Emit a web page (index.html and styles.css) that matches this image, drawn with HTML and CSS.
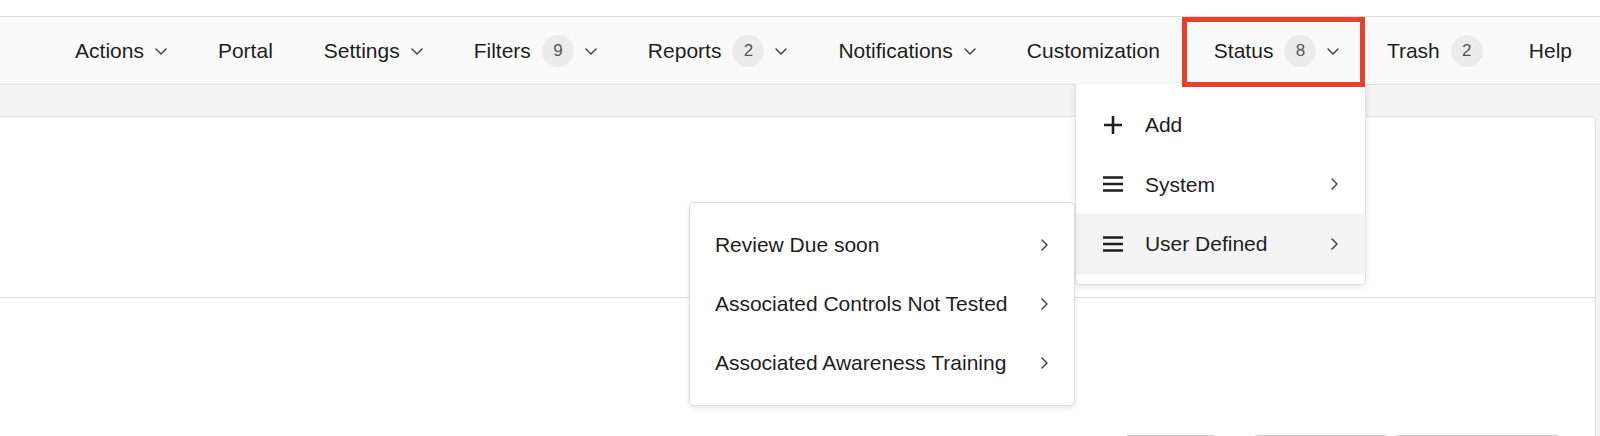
FILE: index.html
```html
<!DOCTYPE html>
<html lang="en">
<head>
<meta charset="utf-8">
<title>Status menu</title>
<link rel="stylesheet" href="styles.css">
</head>
<body>
<div class="topstrip"></div>
<header class="navbar">
  <nav class="nav">
    <div class="nav-item"><span>Actions</span><svg class="chev-down" width="12" height="7" viewBox="0 0 12 7"><path d="M1 1l5 5 5-5"/></svg></div>
    <div class="nav-item"><span>Portal</span></div>
    <div class="nav-item"><span>Settings</span><svg class="chev-down" width="12" height="7" viewBox="0 0 12 7"><path d="M1 1l5 5 5-5"/></svg></div>
    <div class="nav-item"><span>Filters</span><span class="badge">9</span><svg class="chev-down" width="12" height="7" viewBox="0 0 12 7"><path d="M1 1l5 5 5-5"/></svg></div>
    <div class="nav-item"><span>Reports</span><span class="badge">2</span><svg class="chev-down" width="12" height="7" viewBox="0 0 12 7"><path d="M1 1l5 5 5-5"/></svg></div>
    <div class="nav-item"><span>Notifications</span><svg class="chev-down" width="12" height="7" viewBox="0 0 12 7"><path d="M1 1l5 5 5-5"/></svg></div>
    <div class="nav-item"><span>Customization</span></div>
    <div class="nav-item nav-item--open"><span>Status</span><span class="badge">8</span><svg class="chev-down" width="12" height="7" viewBox="0 0 12 7"><path d="M1 1l5 5 5-5"/></svg>
      <div class="dropdown">
        <div class="menu-row">
          <svg class="menu-icon" width="20" height="20" viewBox="0 0 20 20"><path d="M10 1v18M1 10h18"/></svg>
          <span class="menu-label">Add</span>
        </div>
        <div class="menu-row">
          <svg class="menu-icon" width="20" height="16" viewBox="0 0 20 16"><path d="M0 1.5h20M0 8h20M0 14.5h20"/></svg>
          <span class="menu-label">System</span>
          <svg class="chev-right" width="7" height="12" viewBox="0 0 7 12"><path d="M1 1l5 5-5 5"/></svg>
        </div>
        <div class="menu-row menu-row--hover">
          <svg class="menu-icon" width="20" height="16" viewBox="0 0 20 16"><path d="M0 1.5h20M0 8h20M0 14.5h20"/></svg>
          <span class="menu-label">User Defined</span>
          <svg class="chev-right" width="7" height="12" viewBox="0 0 7 12"><path d="M1 1l5 5-5 5"/></svg>
          <div class="submenu">
            <div class="sub-row"><span class="menu-label">Review Due soon</span><svg class="chev-right" width="7" height="12" viewBox="0 0 7 12"><path d="M1 1l5 5-5 5"/></svg></div>
            <div class="sub-row"><span class="menu-label">Associated Controls Not Tested</span><svg class="chev-right" width="7" height="12" viewBox="0 0 7 12"><path d="M1 1l5 5-5 5"/></svg></div>
            <div class="sub-row"><span class="menu-label">Associated Awareness Training</span><svg class="chev-right" width="7" height="12" viewBox="0 0 7 12"><path d="M1 1l5 5-5 5"/></svg></div>
          </div>
        </div>
      </div>
    </div>
    <div class="nav-item nav-item--trash"><span>Trash</span><span class="badge">2</span></div>
    <div class="nav-item nav-item--help"><span>Help</span></div>
  </nav>
</header>
<div class="page">
  <main class="card">
    <section class="card-top"></section>
    <section class="card-body">
      <div class="actions">
        <button class="btn btn--a"></button>
        <button class="btn btn--b"></button>
        <button class="btn btn--c"></button>
      </div>
    </section>
  </main>
</div>
</body>
</html>
```
FILE: styles.css
```css
* { box-sizing: border-box; }
html, body {
  margin: 0;
  padding: 0;
  width: 1600px;
  height: 436px;
  overflow: hidden;
  background: #ffffff;
  font-family: "Liberation Sans", Arial, Helvetica, sans-serif;
  color: #1e1e1e;
}
.topstrip {
  height: 16px;
  background: #ffffff;
}
.navbar {
  position: relative;
  z-index: 5;
  height: 69px;
  background: #fafafa;
  border-top: 1px solid #dcdcdc;
  border-bottom: 1px solid #dcdcdc;
}
.nav {
  display: flex;
  justify-content: flex-end;
  align-items: stretch;
  height: 100%;
  padding-right: 0;
}
.nav-item {
  position: relative;
  display: flex;
  align-items: center;
  gap: 11px;
  padding: 0 25.5px;
  font-size: 21px;
  line-height: 1;
  white-space: nowrap;
}
.nav-item--open { padding-left: 28.5px; }
.nav-item--trash { padding-left: 22px; padding-right: 24px; }
.nav-item--help { padding-left: 22px; padding-right: 28px; }
.chev-down path,
.chev-right path {
  fill: none;
  stroke: #3a3a3a;
  stroke-width: 1.4;
  stroke-linecap: round;
  stroke-linejoin: round;
}
.chev-down { margin-top: 1px; }
.badge {
  display: inline-flex;
  align-items: center;
  justify-content: center;
  width: 32px;
  height: 32px;
  border-radius: 50%;
  background: #ececec;
  color: #555555;
  font-size: 17px;
}
.nav-item--open::after {
  content: "";
  position: absolute;
  top: 0;
  left: -3px;
  right: 0;
  bottom: -3px;
  border: 5px solid #e8412b;
  pointer-events: none;
  z-index: 3;
}
.dropdown {
  position: absolute;
  top: 100%;
  right: -1px;
  width: 291px;
  padding: 11px 0 10px;
  background: #ffffff;
  border: 1px solid #e0e0e0;
  border-top: none;
  border-radius: 0 0 5px 5px;
  box-shadow: 0 2px 6px rgba(0, 0, 0, 0.10);
  z-index: 2;
}
.menu-row {
  position: relative;
  display: flex;
  align-items: center;
  height: 59.5px;
  padding: 0 27px 0 27px;
  font-size: 21px;
}
.menu-row--hover { background: #f4f4f4; }
.menu-icon {
  flex: none;
  width: 20px;
  margin-right: 22px;
}
.menu-icon path {
  fill: none;
  stroke: #1e1e1e;
  stroke-width: 2.6;
}
.menu-label {
  flex: 1;
  white-space: nowrap;
}
.chev-right { flex: none; }
.submenu {
  position: absolute;
  top: -12px;
  right: 100%;
  margin-right: 1px;
  width: 386px;
  padding: 12px 0 13px;
  background: #ffffff;
  border: 1px solid #dedede;
  border-radius: 5px;
  box-shadow: 0 2px 6px rgba(0, 0, 0, 0.10);
}
.sub-row {
  display: flex;
  align-items: center;
  height: 59px;
  padding: 0 26px 0 25px;
  font-size: 21px;
}
.page {
  background: #f4f4f4;
  padding-top: 31px;
  height: 351px;
  overflow: hidden;
}
.card {
  margin-left: -8px;
  margin-right: 4px;
  background: #ffffff;
  border: 1px solid #e0e0e0;
  border-radius: 5px;
}
.card-top {
  height: 181px;
  border-bottom: 1px solid #dcdcdc;
}
.card-body {
  padding-top: 137px;
  padding-right: 35px;
}
.actions {
  display: flex;
  justify-content: flex-end;
}
.btn {
  height: 32px;
  background: #ffffff;
  border: 1px solid #cfcfcf;
  border-radius: 4px;
  padding: 0;
}
.btn--a { width: 93px; margin-right: 36px; }
.btn--b { width: 136px; margin-right: 5px; }
.btn--c { width: 166px; }
```
